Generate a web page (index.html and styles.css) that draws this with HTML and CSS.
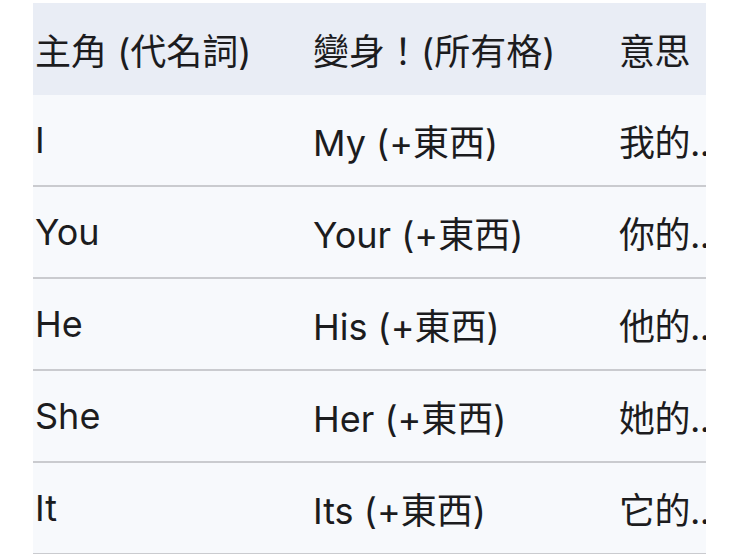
FILE: index.html
```html
<!DOCTYPE html>
<html lang="zh-Hant">
<head>
<meta charset="utf-8">
<link rel="stylesheet" href="styles.css">
</head>
<body>
<div class="page">
  <div class="table">
    <div class="row head">
      <div class="cell">主角 (代名詞)</div>
      <div class="cell">變身！(所有格)</div>
      <div class="cell">意思</div>
    </div>
    <div class="row">
      <div class="cell">I</div>
      <div class="cell">My (+東西)</div>
      <div class="cell">我的...</div>
    </div>
    <div class="row">
      <div class="cell">You</div>
      <div class="cell">Your (+東西)</div>
      <div class="cell">你的...</div>
    </div>
    <div class="row">
      <div class="cell">He</div>
      <div class="cell">His (+東西)</div>
      <div class="cell">他的...</div>
    </div>
    <div class="row">
      <div class="cell">She</div>
      <div class="cell">Her (+東西)</div>
      <div class="cell">她的...</div>
    </div>
    <div class="row">
      <div class="cell">It</div>
      <div class="cell">Its (+東西)</div>
      <div class="cell">它的...</div>
    </div>
  </div>
</div>
</body>
</html>
```

FILE: styles.css
```css
html, body {
  margin: 0;
  padding: 0;
  background: #ffffff;
}
body {
  font-family: "Inter", "Noto Sans CJK TC", "Noto Sans CJK SC", sans-serif;
  color: #1c1c1e;
  overflow: hidden;
}
.page {
  padding: 3px 0 0 33px;
  height: 551px;
  overflow: hidden;
}
.table {
  width: 673px;
  overflow: hidden;
  background: #f7f9fc;
}
.row {
  display: grid;
  grid-template-columns: 278px 306px 200px;
  height: 90px;
  align-items: center;
  border-bottom: 2px solid #cacbcf;
  font-size: 36px;
  white-space: nowrap;
}
.row.head {
  background: #e9edf5;
  height: 92px;
  border-bottom: none;
}
.cell {
  padding-left: 2px;
}
.cell:last-child {
  letter-spacing: -0.5px;
}
```
